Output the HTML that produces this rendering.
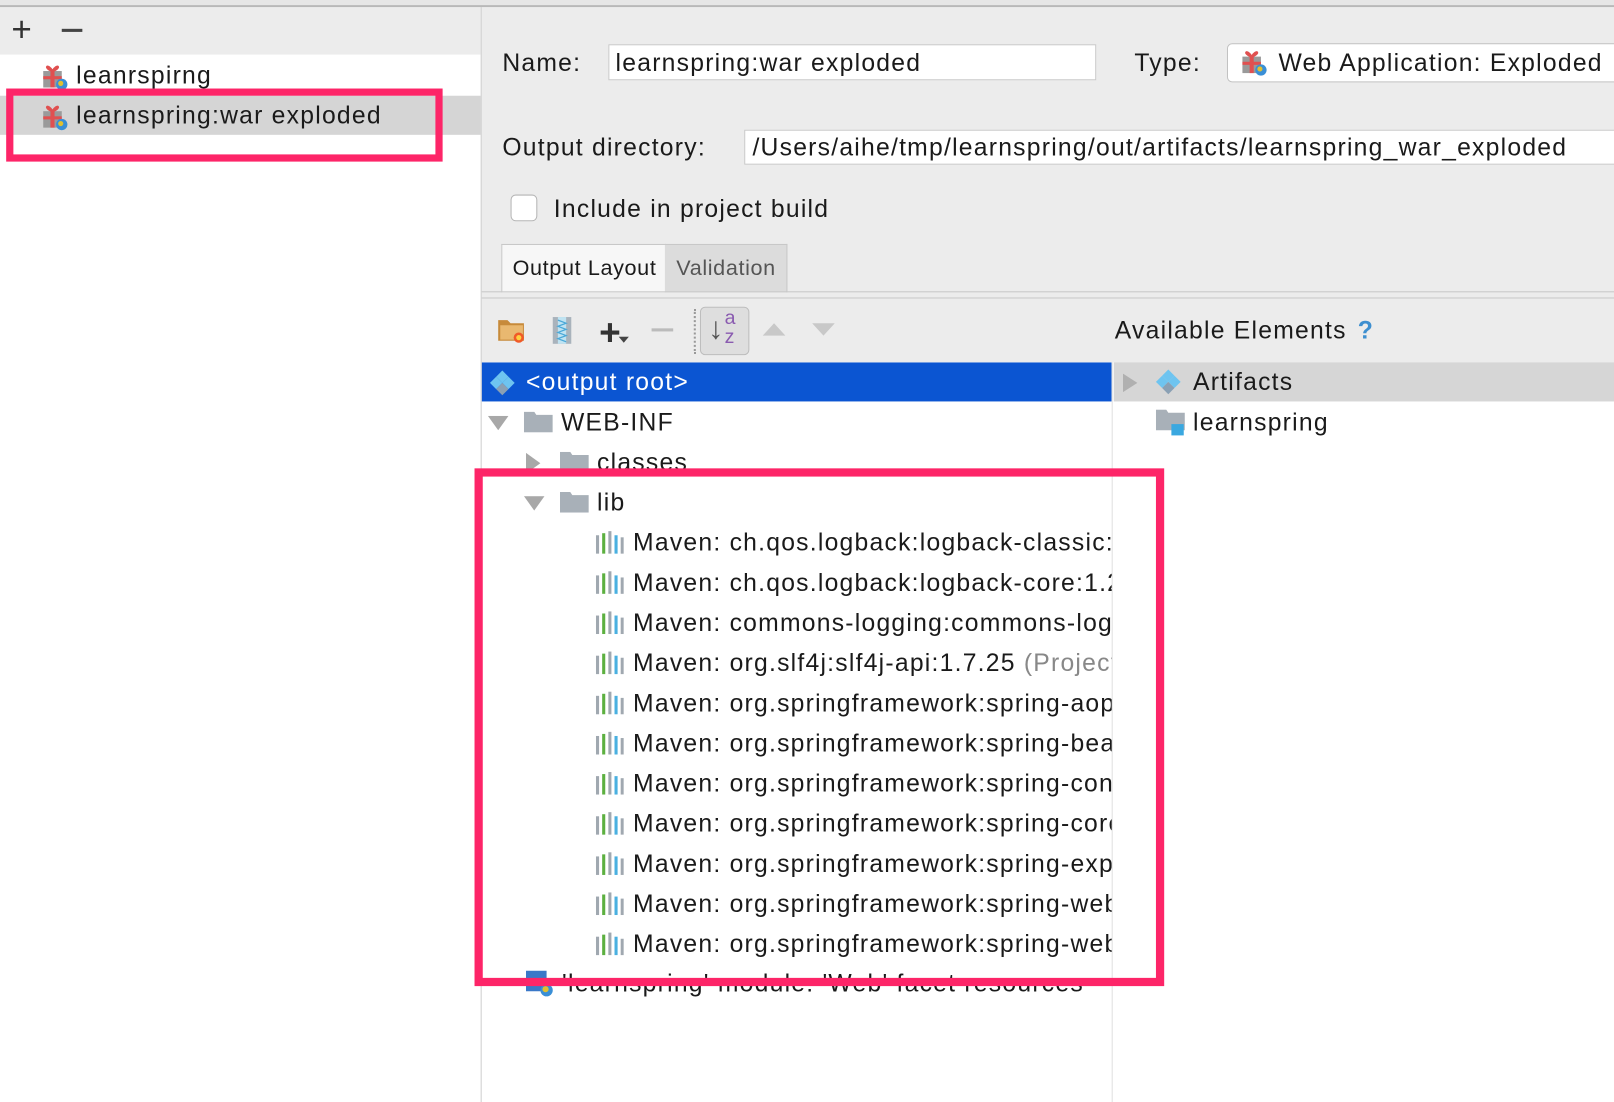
<!DOCTYPE html>
<html><head><meta charset="utf-8"><style>
html,body{margin:0;padding:0;width:1614px;height:1102px;overflow:hidden;background:#fff}
#w{position:absolute;left:0;top:0;width:1568px;height:1071px;transform:scale(1.02934);transform-origin:0 0;font-family:"Liberation Sans",sans-serif;font-size:24px;letter-spacing:1.2px;color:#1a1a1a;background:#fff}
.a{position:absolute}
.t{position:absolute;white-space:nowrap;line-height:39px;height:39px}
.gift{position:absolute;width:26px;height:28px}
.fold{position:absolute;width:28px;height:20px}
.mv{position:absolute;width:28px;height:24px}
</style></head><body><div id="w">
<svg width="0" height="0" style="position:absolute"><defs>
<g id="gf"><rect x="2" y="9" width="18" height="16" fill="#9a9a9a"/><rect x="9" y="9" width="4" height="16" fill="#e05050"/><rect x="2" y="14" width="18" height="3" fill="#e05050"/><path d="M11 9C6 1 2 6 11 9C16 1 20 6 11 9" stroke="#e05050" stroke-width="2" fill="none"/><circle cx="20" cy="22" r="5.5" fill="#3a8fd6"/><circle cx="19" cy="21" r="2.5" fill="#e0c030"/></g>
<g id="m"><rect x="1" y="6" width="3" height="18" fill="#a0a8b0"/><rect x="7" y="4" width="3" height="20" fill="#5cb040"/><rect x="13" y="2" width="3" height="22" fill="#a0a8b0"/><rect x="19" y="6" width="3" height="18" fill="#4ab0e0"/><rect x="25" y="8" width="3" height="16" fill="#a0a8b0"/></g>
<g id="dm"><path d="M13 1l6 6-6 6-6-6z" fill="#6ec4f0"/><path d="M7 7l6 6-6 6-6-6z" fill="#6ec4f0"/><path d="M19 7l6 6-6 6-6-6z" fill="#6ec4f0"/><path d="M13 13l6 6-6 6-6-6z" fill="#8aa0b4"/></g>
</defs></svg>
<div class="a" style="left:0;top:0;width:1568px;height:5px;background:#e6e6e6;border-bottom:2px solid #b8b8b8"></div>
<div class="a" style="left:0;top:7px;width:467px;height:46px;background:#ececec"></div>
<div class="a" style="left:11px;top:9px;font-size:34px;line-height:40px;color:#333">+</div>
<div class="a" style="left:60px;top:28px;width:20px;height:3px;background:#444"></div>
<div class="a" style="left:0;top:93px;width:467px;height:38px;background:#d5d5d5"></div>
<svg class="gift" style="left:40px;top:60px" viewBox="0 0 26 28"><use href="#gf"/></svg>
<div class="t" style="left:74px;top:54px">leanrspirng</div>
<svg class="gift" style="left:40px;top:99px" viewBox="0 0 26 28"><use href="#gf"/></svg>
<div class="t" style="left:74px;top:93px">learnspring:war exploded</div>
<div class="a" style="left:6px;top:86px;width:410px;height:57px;border:7px solid #fd2568"></div>
<div class="a" style="left:467px;top:7px;width:1px;height:1064px;background:#c8c8c8"></div>
<div class="a" style="left:468px;top:7px;width:1100px;height:345px;background:#ececec"></div>
<div class="t" style="left:488px;top:42px">Name:</div>
<div class="a" style="left:591px;top:43px;width:472px;height:33px;background:#fff;border:1px solid #c9c9c9"></div>
<div class="t" style="left:598px;top:42px">learnspring:war exploded</div>
<div class="t" style="left:1102px;top:42px">Type:</div>
<div class="a" style="left:1192px;top:42px;width:390px;height:36px;background:#fff;border:1px solid #c2c2c2;border-radius:5px"></div>
<svg class="gift" style="left:1205px;top:46px" viewBox="0 0 26 28"><use href="#gf"/></svg>
<div class="t" style="left:1242px;top:42px">Web Application: Exploded</div>
<div class="t" style="left:488px;top:124px">Output directory:</div>
<div class="a" style="left:723px;top:126px;width:860px;height:32px;background:#fff;border:1px solid #c9c9c9"></div>
<div class="t" style="left:731px;top:124px">/Users/aihe/tmp/learnspring/out/artifacts/learnspring_war_exploded</div>
<div class="a" style="left:496px;top:189px;width:24px;height:24px;background:#fff;border:1px solid #b5b5b5;border-radius:5px"></div>
<div class="t" style="left:538px;top:184px">Include in project build</div>
<div class="a" style="left:487px;top:237px;width:158px;height:46px;background:#f7f7f7;border:1px solid #c8c8c8;border-bottom:none"></div>
<div class="a" style="left:646px;top:237px;width:118px;height:46px;background:#dcdcdc;border:1px solid #c8c8c8;border-bottom:none;border-left:none"></div>
<div class="t" style="left:498px;top:241px;font-size:21px;letter-spacing:0.6px">Output Layout</div>
<div class="t" style="left:657px;top:241px;font-size:21px;letter-spacing:0.6px;color:#555">Validation</div>
<div class="a" style="left:468px;top:283px;width:1100px;height:1px;background:#c8c8c8"></div>
<div class="a" style="left:468px;top:289px;width:1100px;height:1px;background:#c8c8c8"></div>
<svg class="a" style="left:483px;top:308px" width="30" height="28" viewBox="0 0 30 28"><path d="M1 3h9l3 3h13v17H1z" fill="#c78a3a"/><path d="M3 8h22v14H3z" fill="#e9b870"/><circle cx="21" cy="20" r="5" fill="#f05a28"/><circle cx="21" cy="20" r="2.5" fill="#ffd040"/></svg>
<svg class="a" style="left:536px;top:307px" width="20" height="28" viewBox="0 0 20 28"><rect x="1" y="1" width="18" height="26" fill="#a9b3bc"/><rect x="6" y="1" width="8" height="26" fill="#bfe3f2"/><path d="M6 4l8 3-8 3 8 3-8 3 8 3-8 3 8 3" stroke="#4aa8d8" stroke-width="1.2" fill="none"/></svg>
<div class="a" style="left:582px;top:305px;font-size:36px;line-height:36px;color:#333;font-weight:bold">+</div>
<svg class="a" style="left:601px;top:327px" width="10" height="7"><path d="M0 0h10L5 6z" fill="#444"/></svg>
<div class="a" style="left:633px;top:319px;width:21px;height:3px;background:#bbb"></div>
<div class="a" style="left:674px;top:300px;width:0;height:44px;border-left:2px dotted #999"></div>
<div class="a" style="left:680px;top:298px;width:46px;height:45px;background:#dedede;border:1px solid #bdbdbd;border-radius:5px"></div>
<div class="a" style="left:688px;top:300px;font-size:30px;line-height:40px;color:#555">↓</div>
<div class="a" style="left:704px;top:301px;font-size:19px;line-height:18px;color:#8a5bb0">a<br>z</div>
<svg class="a" style="left:741px;top:313px" width="22" height="14"><path d="M0 13L11 1l11 12z" fill="#c8c8c8"/></svg>
<svg class="a" style="left:789px;top:313px" width="22" height="14"><path d="M0 1l11 12L22 1z" fill="#c8c8c8"/></svg>
<div class="t" style="left:1083px;top:302px">Available Elements</div>
<div class="t" style="left:1319px;top:302px;color:#3d8fd0;font-weight:bold">?</div>
<div class="a" style="left:468px;top:352px;width:612px;height:719px;background:#fff;overflow:hidden">
  <div class="a" style="left:0;top:0;width:612px;height:38px;background:#0b55d2"></div>
  <svg class="a" style="left:7px;top:7px" width="26" height="26" viewBox="0 0 26 26"><use href="#dm"/></svg>
  <div class="t" style="left:43px;top:0;color:#fff">&lt;output root&gt;</div>
  <svg class="a" style="left:6px;top:52px" width="20" height="14"><path d="M0 0h20L10 14z" fill="#a8a8a8"/></svg>
  <svg class="fold" style="left:41px;top:48px" viewBox="0 0 28 20"><path d="M0 0h10l2 3h16v17H0z" fill="#a8b0b8"/></svg>
  <div class="t" style="left:77px;top:39px">WEB-INF</div>
  <svg class="a" style="left:43px;top:88px" width="14" height="20"><path d="M0 0v20L14 10z" fill="#a8a8a8"/></svg>
  <svg class="fold" style="left:76px;top:87px" viewBox="0 0 28 20"><path d="M0 0h10l2 3h16v17H0z" fill="#a8b0b8"/></svg>
  <div class="t" style="left:112px;top:78px">classes</div>
  <svg class="a" style="left:41px;top:130px" width="20" height="14"><path d="M0 0h20L10 14z" fill="#a8a8a8"/></svg>
  <svg class="fold" style="left:76px;top:126px" viewBox="0 0 28 20"><path d="M0 0h10l2 3h16v17H0z" fill="#a8b0b8"/></svg>
  <div class="t" style="left:112px;top:117px">lib</div>
</div>
<div class="a" style="left:1080px;top:352px;width:1px;height:719px;background:#e0e0e0"></div>
<div class="a" style="left:1082px;top:352px;width:486px;height:38px;background:#d6d6d6"></div>
<svg class="a" style="left:1091px;top:363px" width="14" height="18"><path d="M0 0v18L14 9z" fill="#b0b0b0"/></svg>
<svg class="a" style="left:1122px;top:358px" width="26" height="26" viewBox="0 0 26 26"><use href="#dm"/></svg>
<div class="t" style="left:1159px;top:352px">Artifacts</div>
<svg class="a" style="left:1123px;top:398px" width="30" height="26" viewBox="0 0 30 26"><path d="M0 0h10l2 3h16v17H0z" fill="#a8b0b8"/><rect x="15" y="14" width="12" height="11" fill="#3aa8e0"/></svg>
<div class="t" style="left:1159px;top:391px">learnspring</div>
<div class="a" style="left:578px;top:508px;width:502px;height:440px;overflow:hidden">
<div style="position:absolute;left:0;top:0">
<div style="position:relative;height:39px"><svg class="mv" style="left:0;top:6px"><use href="#m"/></svg><span class="t" style="left:37px;top:0">Maven: ch.qos.logback:logback-classic:1.2.3 (Project Library)</span></div>
<div style="position:relative;height:39px"><svg class="mv" style="left:0;top:6px"><use href="#m"/></svg><span class="t" style="left:37px;top:0">Maven: ch.qos.logback:logback-core:1.2.3 (Project Library)</span></div>
<div style="position:relative;height:39px"><svg class="mv" style="left:0;top:6px"><use href="#m"/></svg><span class="t" style="left:37px;top:0">Maven: commons-logging:commons-logging:1.2</span></div>
<div style="position:relative;height:39px"><svg class="mv" style="left:0;top:6px"><use href="#m"/></svg><span class="t" style="left:37px;top:0">Maven: org.slf4j:slf4j-api:1.7.25 <span style="color:#888">(Project Library)</span></span></div>
<div style="position:relative;height:39px"><svg class="mv" style="left:0;top:6px"><use href="#m"/></svg><span class="t" style="left:37px;top:0">Maven: org.springframework:spring-aop:5.0</span></div>
<div style="position:relative;height:39px"><svg class="mv" style="left:0;top:6px"><use href="#m"/></svg><span class="t" style="left:37px;top:0">Maven: org.springframework:spring-beans:5.0</span></div>
<div style="position:relative;height:39px"><svg class="mv" style="left:0;top:6px"><use href="#m"/></svg><span class="t" style="left:37px;top:0">Maven: org.springframework:spring-context:5.0</span></div>
<div style="position:relative;height:39px"><svg class="mv" style="left:0;top:6px"><use href="#m"/></svg><span class="t" style="left:37px;top:0">Maven: org.springframework:spring-core:5.0</span></div>
<div style="position:relative;height:39px"><svg class="mv" style="left:0;top:6px"><use href="#m"/></svg><span class="t" style="left:37px;top:0">Maven: org.springframework:spring-expression:5.0</span></div>
<div style="position:relative;height:39px"><svg class="mv" style="left:0;top:6px"><use href="#m"/></svg><span class="t" style="left:37px;top:0">Maven: org.springframework:spring-web:5.0</span></div>
<div style="position:relative;height:39px"><svg class="mv" style="left:0;top:6px"><use href="#m"/></svg><span class="t" style="left:37px;top:0">Maven: org.springframework:spring-webmvc:5.0</span></div>
</div></div>
<svg class="a" style="left:511px;top:943px" width="28" height="26" viewBox="0 0 28 26"><rect x="0" y="0" width="20" height="20" fill="#3a78c8"/><circle cx="20" cy="19" r="6" fill="#3a8fd6"/><circle cx="19" cy="18" r="3" fill="#e0c030"/></svg>
<div class="t" style="left:546px;top:936px">'learnspring' module: 'Web' facet resources</div>
<div class="a" style="left:461px;top:455px;width:654px;height:487px;border:8px solid #fd2568"></div>
</div></body></html>
